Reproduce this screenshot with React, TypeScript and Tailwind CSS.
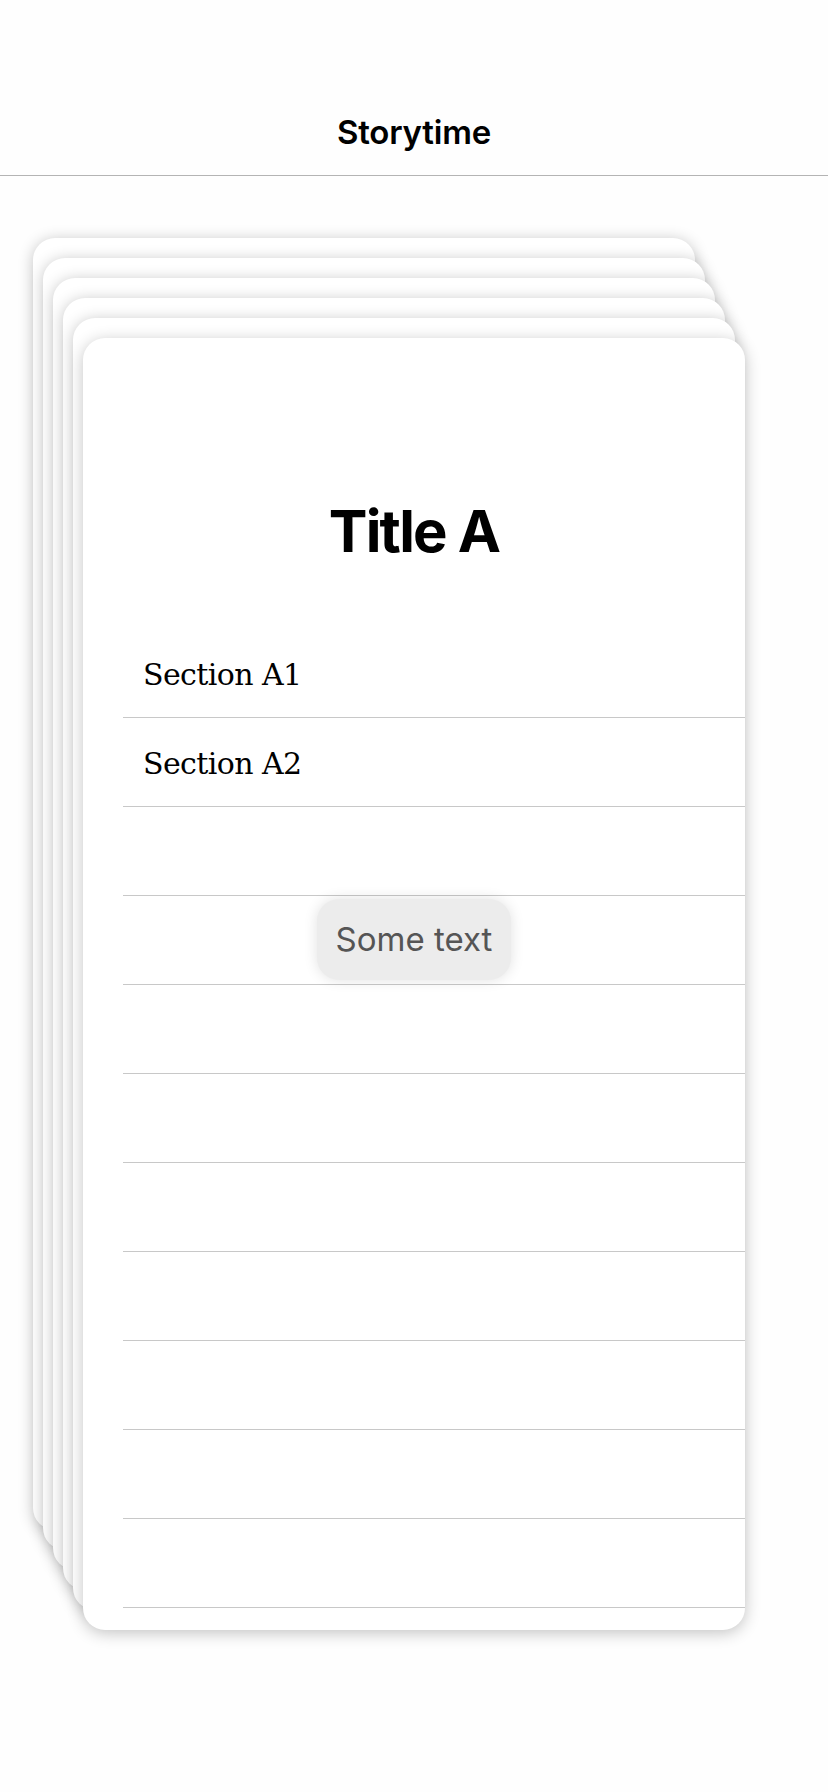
import React from "react";

const offsets = [
  "ml-[33px] mt-0",
  "ml-[43px] mt-[20px]",
  "ml-[53px] mt-[40px]",
  "ml-[63px] mt-[60px]",
  "ml-[73px] mt-[80px]",
];

export default function App() {
  const rows = ["Section A1", "Section A2", "", "", "", "", "", "", "", "", ""];
  return (
    <div className="min-h-[1792px] w-[828px] bg-[#fefefe]" style={{ fontFamily: "Inter, 'Noto Sans', sans-serif" }}>
      <header className="h-[176px] border-b border-[#b4b4b4] flex items-end justify-center pb-[26px]">
        <h1 className="text-[33px] font-semibold leading-none text-black tracking-[-0.2px]">Storytime</h1>
      </header>
      <main className="pt-[62px]">
        <div className="grid">
          {offsets.map((o, i) => (
            <div
              key={i}
              className={`col-start-1 row-start-1 w-[662px] h-[1292px] rounded-[22px] bg-white shadow-[0_2px_15px_rgba(0,0,0,0.24)] ${o}`}
            />
          ))}
          <div className="col-start-1 row-start-1 ml-[83px] mt-[100px] w-[662px] h-[1292px] rounded-[22px] bg-white shadow-[0_3px_16px_rgba(0,0,0,0.24)] relative overflow-hidden">
            <div className="pt-[164px] flex justify-center">
              <h2 className="text-[58px] font-bold leading-none text-black tracking-[-1.8px]">Title A</h2>
            </div>
            <ul className="mt-[69px] ml-[40px]">
              {rows.map((r, i) => (
                <li
                  key={i}
                  className="h-[89px] border-b border-[#c8c8c8] flex items-center pl-[20px] pt-[2px] text-[30px] tracking-[-0.6px] text-black"
                  style={{ fontFamily: "'DejaVu Serif', serif" }}
                >
                  {r}
                </li>
              ))}
            </ul>
            <div className="absolute left-[234px] top-[561px] w-[194px] h-[81px] rounded-[22px] bg-[#ececec] shadow-[0_0_14px_rgba(0,0,0,0.12)] flex items-center justify-center">
              <span className="text-[33px] text-[#555555] leading-none">Some text</span>
            </div>
          </div>
        </div>
      </main>
    </div>
  );
}
